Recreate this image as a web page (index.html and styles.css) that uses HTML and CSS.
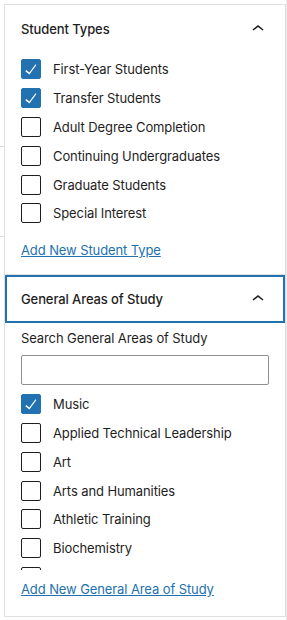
FILE: index.html
```html
<!DOCTYPE html>
<html lang="en">
<head>
<meta charset="utf-8">
<title>Taxonomies</title>
<link rel="stylesheet" href="styles.css">
</head>
<body>
<div class="page">
  <div class="gutter-left">
    <span class="rule rule-a"></span>
    <span class="rule rule-b"></span>
  </div>
  <div class="sidebar">
    <section class="panel panel-first">
      <div class="panel-head">
        <h2 class="panel-title">Student Types</h2>
        <svg class="chevron" viewBox="0 0 24 24" width="24" height="24"><path d="M6.5 12.4L12 8l5.5 4.4-.9 1.2L12 10l-4.6 3.6-.9-1.2z"/></svg>
      </div>
      <div class="panel-body">
        <ul class="terms">
          <li class="term"><span class="box is-checked"><svg viewBox="0 0 24 24" width="24" height="24"><path d="M16.7 7.1l-6.3 8.5-3.2-2.5-.9 1.2 4.1 3.2 7-9.4-1.1-.9z"/></svg></span><span class="term-label">First-Year Students</span></li>
          <li class="term"><span class="box is-checked"><svg viewBox="0 0 24 24" width="24" height="24"><path d="M16.7 7.1l-6.3 8.5-3.2-2.5-.9 1.2 4.1 3.2 7-9.4-1.1-.9z"/></svg></span><span class="term-label">Transfer Students</span></li>
          <li class="term"><span class="box"></span><span class="term-label">Adult Degree Completion</span></li>
          <li class="term"><span class="box"></span><span class="term-label">Continuing Undergraduates</span></li>
          <li class="term"><span class="box"></span><span class="term-label">Graduate Students</span></li>
          <li class="term"><span class="box"></span><span class="term-label">Special Interest</span></li>
        </ul>
        <a class="add-link" href="#">Add New Student Type</a>
      </div>
    </section>
    <section class="panel panel-second">
      <div class="panel-head is-focused">
        <h2 class="panel-title">General Areas of Study</h2>
        <svg class="chevron" viewBox="0 0 24 24" width="24" height="24"><path d="M6.5 12.4L12 8l5.5 4.4-.9 1.2L12 10l-4.6 3.6-.9-1.2z"/></svg>
      </div>
      <div class="panel-body">
        <label class="search-label" for="search">Search General Areas of Study</label>
        <input class="search-input" id="search" type="search">
        <ul class="terms terms-scroll">
          <li class="term"><span class="box is-checked"><svg viewBox="0 0 24 24" width="24" height="24"><path d="M16.7 7.1l-6.3 8.5-3.2-2.5-.9 1.2 4.1 3.2 7-9.4-1.1-.9z"/></svg></span><span class="term-label">Music</span></li>
          <li class="term"><span class="box"></span><span class="term-label">Applied Technical Leadership</span></li>
          <li class="term"><span class="box"></span><span class="term-label">Art</span></li>
          <li class="term"><span class="box"></span><span class="term-label">Arts and Humanities</span></li>
          <li class="term"><span class="box"></span><span class="term-label">Athletic Training</span></li>
          <li class="term"><span class="box"></span><span class="term-label">Biochemistry</span></li>
          <li class="term"><span class="box"></span></li>
        </ul>
        <a class="add-link" href="#">Add New General Area of Study</a>
      </div>
    </section>
  </div>
  <div class="gutter-right"></div>
</div>
</body>
</html>
```
FILE: styles.css
```css
* { box-sizing: border-box; }
html, body { margin: 0; padding: 0; background: #fff; }
body {
  font-family: Inter, "Noto Sans", "Liberation Sans", sans-serif;
  font-size: 13px;
  letter-spacing: -0.1px;
  color: #1e1e1e;
}
.page {
  display: flex;
  align-items: flex-start;
  height: 620px;
  overflow: hidden;
}
.gutter-left {
  width: 4px;
  flex: none;
  display: flex;
  flex-direction: column;
}
.rule { display: block; height: 1px; background: #dcdcde; }
.rule-a { margin-top: 146px; }
.rule-b { margin-top: 89px; }
.sidebar {
  width: 282px;
  flex: none;
  margin-top: 4px;
  border-top: 1px solid #e0e0e0;
  border-left: 1px solid #e0e0e0;
  border-right: 1px solid #dcdcdc;
}
.gutter-right {
  width: 1px;
  flex: none;
  height: 620px;
  background: #ececec;
}
.panel-second { border-top: 1px solid #e0e0e0; border-bottom: 1px solid #e0e0e0; }
.panel-head {
  height: 48px;
  display: flex;
  align-items: center;
  justify-content: space-between;
  padding: 0 15px 0 16px;
}
.panel-head.is-focused { box-shadow: inset 0 0 0 2px #2271b1; }
.panel-title { margin: 0; font-size: 13px; font-weight: 500; line-height: 18px; }
.chevron { fill: #1e1e1e; display: block; }
.panel-body { padding: 0 16px 16px; }
.panel-first .panel-body { padding-bottom: 15px; }
.terms {
  list-style: none;
  margin: 0;
  padding: 6px 0 0;
}
.term {
  display: flex;
  align-items: center;
  height: 20.8px;
  margin-bottom: 8px;
}
.box {
  position: relative;
  width: 20px;
  height: 20px;
  flex: none;
  border: 1px solid #1e1e1e;
  border-radius: 2px;
  background: #fff;
  margin-right: 12px;
}
.box.is-checked { background: #2271b1; border-color: #2271b1; }
.box svg { position: absolute; left: -3px; top: -3px; fill: #fff; }
.term-label { line-height: 20px; }
.add-link {
  display: inline-block;
  margin-top: 9px;
  color: #2271b1;
  text-decoration: underline;
  line-height: 18px;
}
.search-label { display: block; margin-top: 6px; line-height: 18px; }
.search-input {
  display: block;
  width: 100%;
  height: 30px;
  margin: 8px 0 0;
  border: 1px solid #8c8f94;
  border-radius: 2px;
  background: #fff;
  font: inherit;
  -webkit-appearance: none;
  appearance: none;
}
.terms-scroll {
  margin-top: 3px;
  height: 182px;
  overflow: hidden;
}
.panel-second .add-link { margin-top: 10px; }
.panel-second .panel-body { padding-bottom: 18px; }
```
